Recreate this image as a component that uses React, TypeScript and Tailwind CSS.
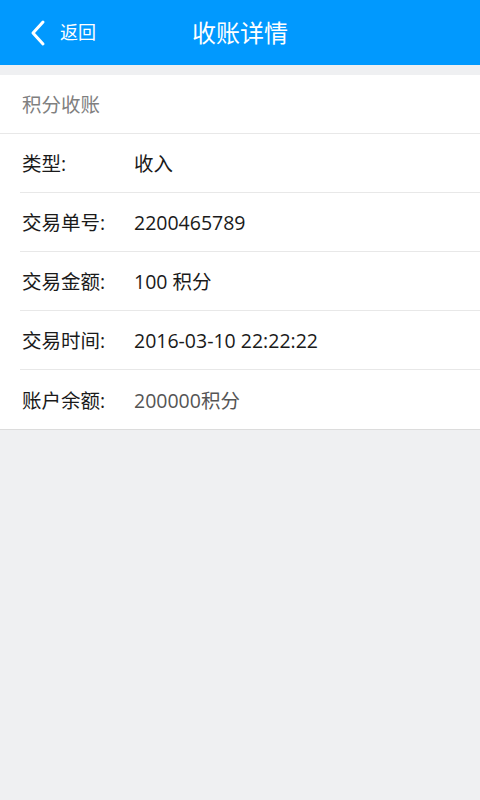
import React from "react";

const rows = [
  { label: "类型:", value: "收入" },
  { label: "交易单号:", value: "2200465789" },
  { label: "交易金额:", value: "100 积分" },
  { label: "交易时间:", value: "2016-03-10 22:22:22" },
  { label: "账户余额:", value: "200000积分", muted: true },
];

export default function App() {
  return (
    <div
      className="min-h-[800px] bg-[#eff0f2]"
      style={{ fontFamily: '"Open Sans", "Noto Sans CJK SC", sans-serif' }}
    >
      {/* Header */}
      <div className="relative flex h-[65px] items-center bg-[#0199fe] text-white">
        <div className="flex items-center pl-[30px]">
          <svg width="16" height="28" viewBox="0 0 16 28" fill="none">
            <path d="M13 3 L3 14 L13 25" stroke="white" strokeWidth="3" strokeLinecap="round" strokeLinejoin="round" />
          </svg>
          <span className="ml-[14px] text-[18px]">返回</span>
        </div>
        <div className="absolute inset-x-0 text-center text-[24px] pointer-events-none">收账详情</div>
      </div>

      <div className="h-[10px]" />

      {/* Card */}
      <div className="border-b border-[#dcdcdc] bg-white">
        <div className="flex h-[59px] items-center border-b border-[#e8e8e8] px-[22px] pt-[2px] text-[19.5px] text-[#808080]">
          积分收账
        </div>
        {rows.map((r, i) => (
          <div key={i} className="ml-[20px]">
            <div
              className={
                "flex h-[59px] items-center pt-[2px] text-[19.5px] " +
                (i < rows.length - 1 ? "border-b border-[#e8e8e8]" : "")
              }
            >
              <span className="w-[114px] pl-[2px] text-[#1a1a1a]">{r.label}</span>
              <span className={r.muted ? "text-[#555555]" : "text-[#1a1a1a]"}>{r.value}</span>
            </div>
          </div>
        ))}
      </div>
    </div>
  );
}
